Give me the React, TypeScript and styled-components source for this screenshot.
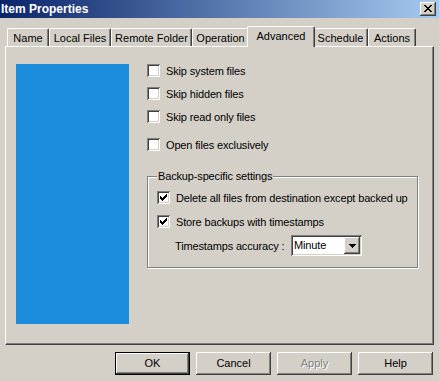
import React from "react";
import styled, { createGlobalStyle, css } from "styled-components";

const GlobalStyle = createGlobalStyle`
  html, body { margin: 0; padding: 0; background: #d4d0c8; }
  body {
    font-family: "Liberation Sans", Arial, sans-serif;
    font-size: 11px;
    letter-spacing: -0.15px;
    color: #000;
  }
  * { box-sizing: border-box; }
`;

const Window = styled.div`
  width: 439px;
  height: 381px;
  background: #d4d0c8;
  display: flex;
  flex-direction: column;
  overflow: hidden;
`;

const TitleBar = styled.div`
  height: 18px;
  flex: none;
  display: flex;
  align-items: center;
  justify-content: space-between;
  padding: 0 3px 0 1px;
  background: linear-gradient(to right, #0a246a, #a6caf0);
`;

const Title = styled.span`
  color: #fff;
  font-weight: bold;
  font-size: 12px;
  letter-spacing: 0;
  line-height: 18px;
`;

const raised = css`
  box-shadow: inset -1px -1px #404040, inset 1px 1px #fff,
    inset -2px -2px #808080, inset 2px 2px #d4d0c8;
`;

const sunken = css`
  box-shadow: inset 1px 1px #808080, inset -1px -1px #fff,
    inset 2px 2px #404040, inset -2px -2px #d4d0c8;
`;

const CloseButton = styled.div`
  width: 16px;
  height: 14px;
  background: #d4d0c8;
  ${raised};
  display: flex;
  align-items: center;
  justify-content: center;
  padding-bottom: 1px;
`;

const Body = styled.div`
  flex: 1;
  display: flex;
  flex-direction: column;
  padding: 8px 5px 0 5px;
`;

const TabRow = styled.div`
  display: flex;
  align-items: flex-end;
  height: 20px;
  padding-left: 2px;
  position: relative;
  z-index: 1;
`;

const Tab = styled.div<{ $width: number; $active?: boolean }>`
  width: ${(p) => p.$width + (p.$active ? 4 : 0)}px;
  height: ${(p) => (p.$active ? 21 : 18)}px;
  margin: ${(p) => (p.$active ? "0 -2px -1px -2px" : "0")};
  position: relative;
  z-index: ${(p) => (p.$active ? 2 : 1)};
  background: #d4d0c8;
  border-top: 1px solid #fff;
  border-left: 1px solid #fff;
  border-right: 1px solid #404040;
  border-radius: 2px 2px 0 0;
  box-shadow: inset -1px 0 #808080;
  display: flex;
  align-items: center;
  justify-content: center;
  padding-bottom: ${(p) => (p.$active ? 3 : 0)}px;
  font-size: 11px;
  letter-spacing: 0;
  white-space: nowrap;
`;

const Panel = styled.div`
  width: 429px;
  height: 299px;
  position: relative;
  border-top: 1px solid #fff;
  border-left: 1px solid #fff;
  border-right: 1px solid #404040;
  border-bottom: 1px solid #404040;
  box-shadow: inset -1px -1px #808080;
  display: flex;
  align-items: flex-start;
  padding: 17px 0 0 10px;
`;

const Preview = styled.div`
  width: 113px;
  height: 260px;
  background: #1b8bdb;
  flex: none;
`;

const Options = styled.div`
  margin-left: 18px;
  display: flex;
  flex-direction: column;
`;

const CheckRow = styled.label<{ $mt?: number }>`
  display: flex;
  align-items: center;
  gap: 6px;
  height: 13px;
  margin-top: ${(p) => p.$mt ?? 0}px;
  white-space: nowrap;
`;

const Box = styled.span`
  width: 13px;
  height: 13px;
  flex: none;
  background: #fff;
  ${sunken};
  display: flex;
  align-items: center;
  justify-content: center;
`;

const Group = styled.div`
  position: relative;
  margin-top: 25px;
  width: 271px;
  height: 92px;
  border: 1px solid #808080;
  box-shadow: inset 1px 1px #fff, 1px 1px #fff;
  padding: 14px 0 0 9px;
  display: flex;
  flex-direction: column;
`;

const Legend = styled.span`
  position: absolute;
  top: -7px;
  left: 9px;
  padding: 0 1px;
  line-height: 13px;
  background: #d4d0c8;
`;

const ComboRow = styled.div`
  display: flex;
  align-items: center;
  margin-top: 7px;
  padding-left: 18px;
`;

const ComboLabel = styled.span`
  width: 116px;
  white-space: nowrap;
`;

const Combo = styled.div`
  width: 71px;
  height: 21px;
  background: #fff;
  ${sunken};
  display: flex;
  align-items: center;
  justify-content: space-between;
  padding: 2px 2px 2px 3px;
`;

const ComboValue = styled.span`
  line-height: 17px;
`;

const ComboButton = styled.div`
  width: 16px;
  height: 17px;
  background: #d4d0c8;
  ${raised};
  display: flex;
  align-items: center;
  justify-content: center;
`;

const ButtonRow = styled.div`
  display: flex;
  justify-content: flex-end;
  gap: 6px;
  margin-top: 7px;
  padding-right: 1px;
`;

const Button = styled.button<{ $default?: boolean }>`
  width: 75px;
  height: 23px;
  padding: 0 0 2px 0;
  margin: 0;
  font-family: inherit;
  font-size: 11px;
  letter-spacing: 0;
  color: #000;
  background: #d4d0c8;
  border: ${(p) => (p.$default ? "1px solid #000" : "none")};
  ${raised};
  &:disabled {
    color: #808080;
    text-shadow: 1px 1px 0 #fff;
  }
`;

const CheckMark = () => (
  <svg width="7" height="7" viewBox="0 0 7 7" shapeRendering="crispEdges">
    {[2, 3, 4, 3, 2, 1, 0].map((y, x) => (
      <rect key={x} x={x} y={y} width="1" height="3" fill="#000" />
    ))}
  </svg>
);

const Check = ({ checked }: { checked?: boolean }) => (
  <Box>{checked && <CheckMark />}</Box>
);

const tabs: { label: string; width: number; active?: boolean }[] = [
  { label: "Name", width: 42 },
  { label: "Local Files", width: 62 },
  { label: "Remote Folder", width: 81 },
  { label: "Operation", width: 57 },
  { label: "Advanced", width: 64, active: true },
  { label: "Schedule", width: 55 },
  { label: "Actions", width: 48 },
];

export default function App() {
  return (
    <>
      <GlobalStyle />
      <Window>
        <TitleBar>
          <Title>Item Properties</Title>
          <CloseButton>
            <svg width="8" height="7" viewBox="0 0 8 7" shapeRendering="crispEdges">
              <path
                d="M0 0h2v1h-2zM6 0h2v1h-2zM1 1h2v1h-2zM5 1h2v1h-2zM2 2h4v1h-4zM3 3h2v1h-2zM2 4h4v1h-4zM1 5h2v1h-2zM5 5h2v1h-2zM0 6h2v1h-2zM6 6h2v1h-2z"
                fill="#000"
              />
            </svg>
          </CloseButton>
        </TitleBar>
        <Body>
          <TabRow>
            {tabs.map((t) => (
              <Tab key={t.label} $width={t.width} $active={t.active}>
                {t.label}
              </Tab>
            ))}
          </TabRow>
          <Panel>
            <Preview />
            <Options>
              <CheckRow>
                <Check />
                Skip system files
              </CheckRow>
              <CheckRow $mt={10}>
                <Check />
                Skip hidden files
              </CheckRow>
              <CheckRow $mt={10}>
                <Check />
                Skip read only files
              </CheckRow>
              <CheckRow $mt={15}>
                <Check />
                Open files exclusively
              </CheckRow>
              <Group>
                <Legend>Backup-specific settings</Legend>
                <CheckRow>
                  <Check checked />
                  Delete all files from destination except backed up
                </CheckRow>
                <CheckRow $mt={11}>
                  <Check checked />
                  Store backups with timestamps
                </CheckRow>
                <ComboRow>
                  <ComboLabel>Timestamps accuracy :</ComboLabel>
                  <Combo>
                    <ComboValue>Minute</ComboValue>
                    <ComboButton>
                      <svg width="7" height="4" viewBox="0 0 7 4" shapeRendering="crispEdges">
                        <path d="M0 0h7v1h-7zM1 1h5v1h-5zM2 2h3v1h-3zM3 3h1v1h-1z" fill="#000" />
                      </svg>
                    </ComboButton>
                  </Combo>
                </ComboRow>
              </Group>
            </Options>
          </Panel>
          <ButtonRow>
            <Button $default>OK</Button>
            <Button>Cancel</Button>
            <Button disabled>Apply</Button>
            <Button>Help</Button>
          </ButtonRow>
        </Body>
      </Window>
    </>
  );
}
